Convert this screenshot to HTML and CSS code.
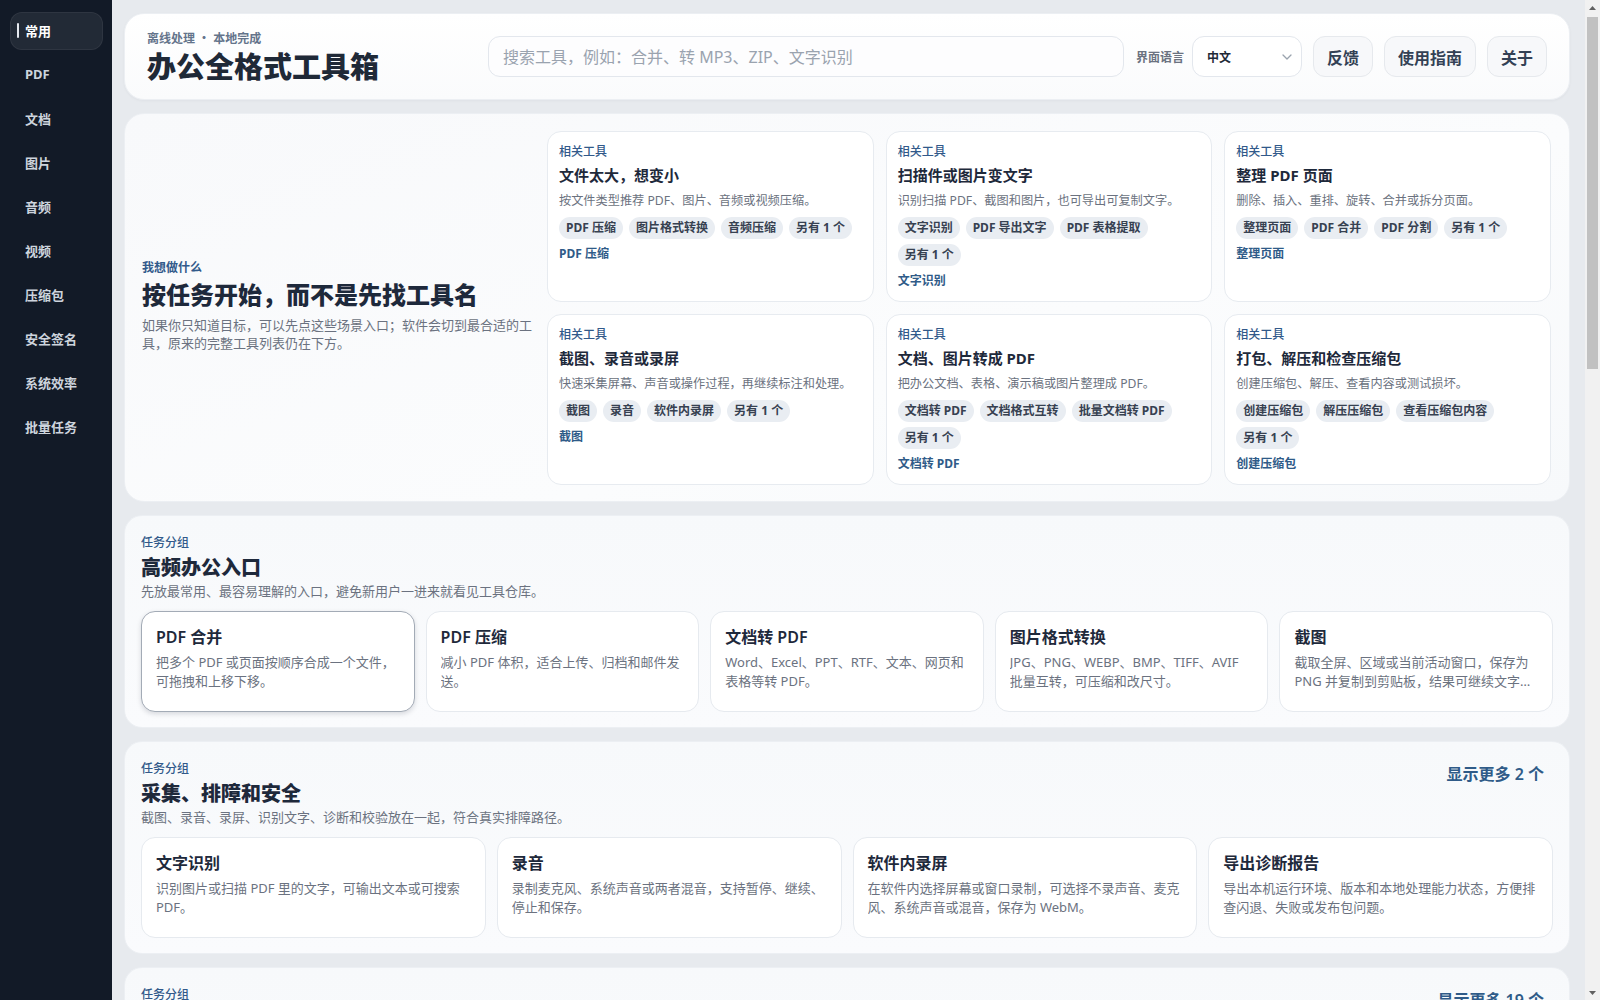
FILE: index.html
```html
<!DOCTYPE html>
<html lang="zh-CN">
<head>
<meta charset="utf-8">
<title>办公全格式工具箱</title>
<link rel="stylesheet" href="styles.css">
</head>
<body>
<div class="app">
  <nav class="sidebar">
    <a class="nav-item active">常用</a>
    <a class="nav-item">PDF</a>
    <a class="nav-item">文档</a>
    <a class="nav-item">图片</a>
    <a class="nav-item">音频</a>
    <a class="nav-item">视频</a>
    <a class="nav-item">压缩包</a>
    <a class="nav-item">安全签名</a>
    <a class="nav-item">系统效率</a>
    <a class="nav-item">批量任务</a>
  </nav>

  <main class="main">
    <header class="topbar">
      <div class="brand">
        <div class="brand-sub">离线处理 ・ 本地完成</div>
        <h1 class="brand-title">办公全格式工具箱</h1>
      </div>
      <input class="search" type="text" placeholder="搜索工具，例如：合并、转 MP3、ZIP、文字识别">
      <div class="lang">
        <span class="lang-label">界面语言</span>
        <div class="select">
          <span>中文</span>
          <svg width="10" height="6" viewBox="0 0 10 6"><path d="M1 1l4 4 4-4" fill="none" stroke="#9aa3ae" stroke-width="1.3" stroke-linecap="round" stroke-linejoin="round"/></svg>
        </div>
      </div>
      <button class="btn">反馈</button>
      <button class="btn">使用指南</button>
      <button class="btn">关于</button>
    </header>

    <section class="hero">
      <div class="hero-intro">
        <div class="hero-kicker">我想做什么</div>
        <h2 class="hero-title">按任务开始，而不是先找工具名</h2>
        <p class="hero-desc">如果你只知道目标，可以先点这些场景入口；软件会切到最合适的工具，原来的完整工具列表仍在下方。</p>
      </div>

      <div class="scene">
        <div class="scene-kicker">相关工具</div>
        <div class="scene-title">文件太大，想变小</div>
        <div class="scene-desc">按文件类型推荐 PDF、图片、音频或视频压缩。</div>
        <div class="chips"><span class="chip">PDF 压缩</span><span class="chip">图片格式转换</span><span class="chip">音频压缩</span><span class="chip">另有 1 个</span></div>
        <div class="scene-link">PDF 压缩</div>
      </div>
      <div class="scene">
        <div class="scene-kicker">相关工具</div>
        <div class="scene-title">扫描件或图片变文字</div>
        <div class="scene-desc">识别扫描 PDF、截图和图片，也可导出可复制文字。</div>
        <div class="chips"><span class="chip">文字识别</span><span class="chip">PDF 导出文字</span><span class="chip">PDF 表格提取</span><span class="chip">另有 1 个</span></div>
        <div class="scene-link">文字识别</div>
      </div>
      <div class="scene">
        <div class="scene-kicker">相关工具</div>
        <div class="scene-title">整理 PDF 页面</div>
        <div class="scene-desc">删除、插入、重排、旋转、合并或拆分页面。</div>
        <div class="chips"><span class="chip">整理页面</span><span class="chip">PDF 合并</span><span class="chip">PDF 分割</span><span class="chip">另有 1 个</span></div>
        <div class="scene-link">整理页面</div>
      </div>
      <div class="scene">
        <div class="scene-kicker">相关工具</div>
        <div class="scene-title">截图、录音或录屏</div>
        <div class="scene-desc">快速采集屏幕、声音或操作过程，再继续标注和处理。</div>
        <div class="chips"><span class="chip">截图</span><span class="chip">录音</span><span class="chip">软件内录屏</span><span class="chip">另有 1 个</span></div>
        <div class="scene-link">截图</div>
      </div>
      <div class="scene">
        <div class="scene-kicker">相关工具</div>
        <div class="scene-title">文档、图片转成 PDF</div>
        <div class="scene-desc">把办公文档、表格、演示稿或图片整理成 PDF。</div>
        <div class="chips"><span class="chip">文档转 PDF</span><span class="chip">文档格式互转</span><span class="chip">批量文档转 PDF</span><span class="chip">另有 1 个</span></div>
        <div class="scene-link">文档转 PDF</div>
      </div>
      <div class="scene">
        <div class="scene-kicker">相关工具</div>
        <div class="scene-title">打包、解压和检查压缩包</div>
        <div class="scene-desc">创建压缩包、解压、查看内容或测试损坏。</div>
        <div class="chips"><span class="chip">创建压缩包</span><span class="chip">解压压缩包</span><span class="chip">查看压缩包内容</span><span class="chip">另有 1 个</span></div>
        <div class="scene-link">创建压缩包</div>
      </div>
    </section>

    <section class="group">
      <div class="group-head">
        <div>
          <div class="group-kicker">任务分组</div>
          <h2 class="group-title">高频办公入口</h2>
          <p class="group-desc">先放最常用、最容易理解的入口，避免新用户一进来就看见工具仓库。</p>
        </div>
      </div>
      <div class="tools tools-5">
        <div class="tool is-active"><div class="tool-title">PDF 合并</div><p class="tool-desc">把多个 PDF 或页面按顺序合成一个文件，可拖拽和上移下移。</p></div>
        <div class="tool"><div class="tool-title">PDF 压缩</div><p class="tool-desc">减小 PDF 体积，适合上传、归档和邮件发送。</p></div>
        <div class="tool"><div class="tool-title">文档转 PDF</div><p class="tool-desc">Word、Excel、PPT、RTF、文本、网页和表格等转 PDF。</p></div>
        <div class="tool"><div class="tool-title">图片格式转换</div><p class="tool-desc">JPG、PNG、WEBP、BMP、TIFF、AVIF 批量互转，可压缩和改尺寸。</p></div>
        <div class="tool"><div class="tool-title">截图</div><p class="tool-desc">截取全屏、区域或当前活动窗口，保存为 PNG 并复制到剪贴板，结果可继续文字识别或标注。</p></div>
      </div>
    </section>

    <section class="group">
      <div class="group-head">
        <div>
          <div class="group-kicker">任务分组</div>
          <h2 class="group-title">采集、排障和安全</h2>
          <p class="group-desc">截图、录音、录屏、识别文字、诊断和校验放在一起，符合真实排障路径。</p>
        </div>
        <button class="more">显示更多 2 个</button>
      </div>
      <div class="tools tools-4">
        <div class="tool"><div class="tool-title">文字识别</div><p class="tool-desc">识别图片或扫描 PDF 里的文字，可输出文本或可搜索 PDF。</p></div>
        <div class="tool"><div class="tool-title">录音</div><p class="tool-desc">录制麦克风、系统声音或两者混音，支持暂停、继续、停止和保存。</p></div>
        <div class="tool"><div class="tool-title">软件内录屏</div><p class="tool-desc">在软件内选择屏幕或窗口录制，可选择不录声音、麦克风、系统声音或混音，保存为 WebM。</p></div>
        <div class="tool"><div class="tool-title">导出诊断报告</div><p class="tool-desc">导出本机运行环境、版本和本地处理能力状态，方便排查闪退、失败或发布包问题。</p></div>
      </div>
    </section>

    <section class="group">
      <div class="group-head">
        <div>
          <div class="group-kicker">任务分组</div>
          <h2 class="group-title">文件处理与格式转换</h2>
          <p class="group-desc">覆盖 PDF、文档、图片、音视频和压缩包的常见转换与整理。</p>
        </div>
        <button class="more">显示更多 19 个</button>
      </div>
      <div class="tools tools-4">
        <div class="tool"><div class="tool-title">PDF 分割</div><p class="tool-desc">按页码范围、固定页数或书签把 PDF 拆成多个文件。</p></div>
        <div class="tool"><div class="tool-title">整理页面</div><p class="tool-desc">删除、插入、重排和旋转 PDF 页面，预览后再保存。</p></div>
        <div class="tool"><div class="tool-title">音频压缩</div><p class="tool-desc">降低音频码率或转换格式，减小文件体积。</p></div>
        <div class="tool"><div class="tool-title">视频转换</div><p class="tool-desc">MP4、MKV、WebM、MOV 等常见格式互转，可只导出音轨。</p></div>
      </div>
    </section>
  </main>

  <div class="scrollbar" aria-hidden="true">
    <div class="sb-arrow"><svg width="7" height="4" viewBox="0 0 7 4"><path d="M0 4L3.5 0 7 4z" fill="#606060"/></svg></div>
    <div class="sb-track"><div class="sb-thumb"></div></div>
    <div class="sb-arrow"><svg width="7" height="4" viewBox="0 0 7 4"><path d="M0 0L3.5 4 7 0z" fill="#606060"/></svg></div>
  </div>
</div>
</body>
</html>
```

FILE: styles.css
```css
* { box-sizing: border-box; margin: 0; padding: 0; }

html, body { height: 100%; }

body {
  font-family: "Noto Sans", "Noto Sans CJK SC", sans-serif;
  color: #1e293b;
  background: #e7eaee;
  overflow: hidden;
}

.app {
  display: flex;
  height: 100vh;
}

/* Sidebar */
.sidebar {
  width: 112px;
  flex: none;
  background: #121a27;
  padding: 12px 9px 0 10px;
  display: flex;
  flex-direction: column;
  gap: 6px;
}

.nav-item {
  display: flex;
  align-items: center;
  height: 38px;
  padding-left: 15px;
  padding-bottom: 2px;
  border-radius: 12px;
  color: #cdd4dd;
  font-size: 13px;
  font-weight: 700;
  text-decoration: none;
  cursor: pointer;
}

.nav-item.active {
  padding-left: 6px;
  color: #ffffff;
  background: rgba(255, 255, 255, 0.07);
  border: 1px solid rgba(255, 255, 255, 0.06);
}

.nav-item.active::before {
  content: "";
  width: 2px;
  height: 15px;
  margin-right: 6px;
  border-radius: 1px;
  background: #e5e9ef;
}

/* Main */
.main {
  flex: 1;
  min-width: 0;
  overflow: hidden;
  padding: 13px 15px 24px 12px;
  display: grid;
  align-content: start;
  gap: 13px;
}

/* Scrollbar strip */
.scrollbar {
  width: 15px;
  flex: none;
  display: flex;
  flex-direction: column;
  background: #f1f1f1;
}

.sb-arrow {
  height: 15px;
  flex: none;
  display: flex;
  align-items: center;
  justify-content: center;
}

.sb-track {
  flex: 1;
  padding: 2px 2px 0;
}

.sb-thumb {
  height: 352px;
  background: #c1c1c1;
}

/* Top bar */
.topbar {
  display: flex;
  align-items: center;
  gap: 11px;
  height: 87px;
  padding: 0 22px;
  background: linear-gradient(180deg, #ffffff, #fafbfc);
  border: 1px solid #eceff3;
  border-radius: 20px;
  box-shadow: 0 1px 3px rgba(15, 23, 42, 0.04);
}

.brand {
  width: 330px;
  flex: none;
  margin-top: 2px;
}

.brand-sub {
  font-size: 12px;
  line-height: 16px;
  font-weight: 700;
  color: #64748b;
}

.brand-title {
  margin-top: 2px;
  font-size: 29px;
  line-height: 36px;
  font-weight: 800;
  color: #1f2937;
}

.search {
  flex: 1;
  min-width: 0;
  height: 41px;
  padding: 0 14px;
  border: 1px solid #e3e7ed;
  border-radius: 12px;
  background: #fdfdfe;
  font-family: inherit;
  font-size: 16px;
  color: #1e293b;
  outline: none;
}

.search::placeholder { color: #9aa3af; }

.lang {
  display: flex;
  align-items: center;
  gap: 8px;
  margin-left: 1px;
}

.lang-label {
  font-size: 12px;
  font-weight: 700;
  color: #6b7280;
}

.select {
  width: 110px;
  height: 41px;
  padding: 0 9px 0 14px;
  display: flex;
  align-items: center;
  justify-content: space-between;
  border: 1px solid #e3e7ed;
  border-radius: 12px;
  background: #ffffff;
  font-size: 12px;
  font-weight: 700;
  color: #1f2937;
}

.btn {
  height: 41px;
  padding: 0 13px;
  border: 1px solid #e6e9ed;
  border-radius: 12px;
  background: #f7f8fa;
  font-family: inherit;
  font-size: 16px;
  font-weight: 600;
  color: #334155;
  cursor: pointer;
}

/* Hero */
.hero {
  display: grid;
  grid-template-columns: 393px repeat(3, 1fr);
  gap: 12px;
  padding: 17px 18px 16px 17px;
  border: 1px solid #eceff3;
  border-radius: 20px;
  background: linear-gradient(160deg, #f8f9fb, #fbfcfd 60%, #f7f9fb);
}

.hero-intro {
  grid-row: 1 / 3;
  align-self: center;
  padding-bottom: 6px;
}

.hero-kicker {
  font-size: 12px;
  line-height: 18px;
  font-weight: 700;
  color: #31598a;
}

.hero-title {
  margin-top: 3px;
  font-size: 24px;
  line-height: 30px;
  font-weight: 800;
  color: #1e293b;
}

.hero-desc {
  margin-top: 6px;
  font-size: 13px;
  line-height: 18px;
  color: #6b7280;
}

.scene {
  min-width: 0;
  padding: 12px 11px;
  background: #ffffff;
  border: 1px solid #e7ebf0;
  border-radius: 14px;
}

.scene-kicker {
  font-size: 12px;
  line-height: 16px;
  font-weight: 500;
  color: #31598a;
}

.scene-title {
  margin-top: 4px;
  font-size: 15px;
  line-height: 22px;
  font-weight: 700;
  color: #1e293b;
}

.scene-desc {
  margin-top: 5px;
  font-size: 12.2px;
  line-height: 19px;
  color: #6b7280;
  white-space: nowrap;
}

.chips {
  margin-top: 7px;
  display: flex;
  flex-wrap: wrap;
  gap: 5px 6px;
}

.chip {
  height: 22px;
  padding: 0 7px;
  border-radius: 11px;
  background: #e9edf2;
  font-size: 12px;
  line-height: 22px;
  font-weight: 700;
  color: #374151;
  white-space: nowrap;
}

.scene-link {
  margin-top: 7px;
  font-size: 12px;
  line-height: 16px;
  font-weight: 700;
  color: #2f5b88;
}

/* Task groups */
.group {
  padding: 16px 16px 15px;
  border: 1px solid #eceff3;
  border-radius: 18px;
  background: linear-gradient(180deg, #f7f9fb, #fafbfd);
}

.group-head {
  display: flex;
  justify-content: space-between;
  align-items: flex-start;
}

.group-kicker {
  font-size: 12px;
  line-height: 22px;
  font-weight: 500;
  color: #31598a;
}

.group-title {
  font-size: 20px;
  line-height: 28px;
  font-weight: 800;
  color: #1e293b;
}

.group-desc {
  font-size: 13px;
  line-height: 18px;
  color: #6b7280;
}

.more {
  padding: 6px 9px;
  border: 0;
  background: none;
  font-family: inherit;
  font-size: 16px;
  line-height: 20px;
  font-weight: 600;
  color: #2f5b88;
  cursor: pointer;
}

.tools {
  margin-top: 11px;
  display: grid;
  gap: 11px;
}

.tools-5 { grid-template-columns: repeat(5, minmax(0, 1fr)); }
.tools-4 { grid-template-columns: repeat(4, minmax(0, 1fr)); }

.tool {
  height: 101px;
  padding: 14px 14px;
  background: #ffffff;
  border: 1px solid #e6eaef;
  border-radius: 14px;
}

.tool.is-active {
  border-color: #a3abb6;
  box-shadow: 0 2px 5px rgba(15, 23, 42, 0.15);
}

.tool-title {
  font-size: 16px;
  line-height: 22px;
  font-weight: 600;
  color: #1e293b;
}

.tool-desc {
  margin-top: 5px;
  font-size: 13px;
  line-height: 19px;
  color: #6b7280;
  display: -webkit-box;
  -webkit-line-clamp: 2;
  -webkit-box-orient: vertical;
  overflow: hidden;
}
```
